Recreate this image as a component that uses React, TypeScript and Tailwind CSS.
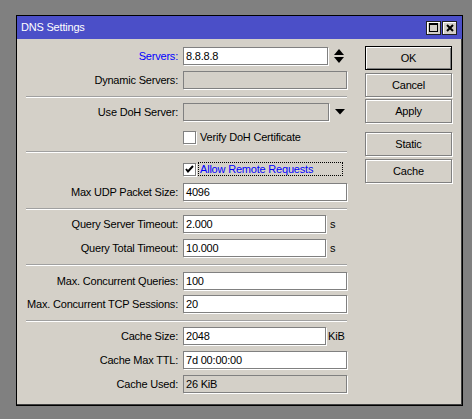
import React from 'react';

function Field({ value = '', disabled = false, w = 'w-[164px]' }: { value?: string; disabled?: boolean; w?: string }) {
  return (
    <div
      className={`${w} h-[18px] border border-[#808080] shadow-[1px_1px_0_#ffffff] pl-[2px] leading-[16px] whitespace-nowrap overflow-hidden ${
        disabled ? 'bg-[#d4d0c8]' : 'bg-white'
      }`}
    >
      {value}
    </div>
  );
}

function Row({ label, blue, className = '', children }: { label: string; blue?: boolean; className?: string; children: React.ReactNode }) {
  return (
    <div className={`flex h-[18px] items-center ${className}`}>
      <div className={`w-[152px] shrink-0 text-right leading-[18px] whitespace-nowrap ${blue ? 'text-[#0000ff]' : 'text-black'}`}>{label}</div>
      <div className="ml-[5px] flex items-center">{children}</div>
    </div>
  );
}

function Sep({ className = '' }: { className?: string }) {
  return <div className={`h-[2px] w-[321px] border-t border-[#a0a0a0] border-b border-b-white ${className}`} />;
}

function Check({ checked }: { checked?: boolean }) {
  return (
    <div className="flex h-[13px] w-[13px] items-center justify-center border border-[#808080] bg-white shadow-[1px_1px_0_#ffffff]">
      {checked && (
        <svg width="9" height="9" viewBox="0 0 9 9">
          <path d="M1 4 L3 6.5 L8 1" stroke="black" strokeWidth="2" fill="none" />
        </svg>
      )}
    </div>
  );
}

function Btn({ label, def, className = '' }: { label: string; def?: boolean; className?: string }) {
  return (
    <div
      className={`flex h-[24px] w-[87px] items-center justify-center text-black ${
        def ? 'border border-black shadow-[inset_1px_1px_0_#ffffff,inset_-1px_-1px_0_#808080]' : 'border border-[#808080] shadow-[1px_1px_0_#ffffff,inset_1px_1px_0_#ffffff]'
      } ${className}`}
    >
      {label}
    </div>
  );
}

function UpDown() {
  return (
    <svg width="10" height="15" viewBox="0 0 10 15" className="ml-[6px]">
      <path d="M5 0 L10 6 L0 6 Z" fill="black" />
      <path d="M0 8 L10 8 L5 14 Z" fill="black" />
    </svg>
  );
}

function DropDown() {
  return (
    <svg width="10" height="6" viewBox="0 0 10 6" className="ml-[6px]">
      <path d="M0 0 L10 0 L5 5.5 Z" fill="black" />
    </svg>
  );
}

export default function App() {
  return (
    <div className="h-[419px] w-[472px] bg-[#808080] pl-[16px] pt-[15px] font-['Liberation_Sans',Arial,sans-serif] text-[11px] tracking-[-0.2px]">
      <div className="flex h-[391px] w-[447px] flex-col border border-black bg-[#d4d0c8] shadow-[inset_-1px_-1px_0_#404040]">
        <div className="flex h-[23px] items-center bg-[#4b4fc8] pl-[4px] pr-[5px] text-white">
          <span className="flex-1 leading-[23px]">DNS Settings</span>
          <div className="flex h-[14px] w-[15px] items-center justify-center border border-[#202020] bg-[#d4d0c8] shadow-[inset_1px_1px_0_#ffffff]">
            <div className="h-[9px] w-[9px] border border-black border-t-2" />
          </div>
          <div className="ml-[1px] flex h-[14px] w-[15px] items-center justify-center border border-[#202020] bg-[#d4d0c8] shadow-[inset_1px_1px_0_#ffffff]">
            <svg width="8" height="8" viewBox="0 0 8 8">
              <path d="M1 1 L7 7 M7 1 L1 7" stroke="black" strokeWidth="2" />
            </svg>
          </div>
        </div>
        <div className="flex pl-[9px]">
          <div className="flex w-[321px] flex-col">
            <Row label="Servers:" blue className="mt-[8px]">
              <Field value="8.8.8.8" w="w-[145px]" />
              <UpDown />
            </Row>
            <Row label="Dynamic Servers:" className="mt-[6px]">
              <Field disabled />
            </Row>
            <Sep className="mt-[7px]" />
            <Row label="Use DoH Server:" className="mt-[5px]">
              <Field disabled w="w-[146px]" />
              <DropDown />
            </Row>
            <div className="mt-[9px] flex h-[14px] items-center pl-[157px]">
              <Check />
              <span className="ml-[4px] whitespace-nowrap">Verify DoH Certificate</span>
            </div>
            <Sep className="mt-[7px]" />
            <div className="mt-[9px] flex h-[14px] items-center pl-[157px]">
              <Check checked />
              <span className="ml-[2px] h-[14px] w-[145px] border border-dotted border-black pl-[1px] leading-[12px] whitespace-nowrap text-[#0000ff]">
                Allow Remote Requests
              </span>
            </div>
            <Row label="Max UDP Packet Size:" className="mt-[7px]">
              <Field value="4096" />
            </Row>
            <Sep className="mt-[7px]" />
            <Row label="Query Server Timeout:" className="mt-[5px]">
              <Field value="2.000" w="w-[143px]" />
              <span className="ml-[4px]">s</span>
            </Row>
            <Row label="Query Total Timeout:" className="mt-[6px]">
              <Field value="10.000" w="w-[143px]" />
              <span className="ml-[4px]">s</span>
            </Row>
            <Sep className="mt-[7px]" />
            <Row label="Max. Concurrent Queries:" className="mt-[6px]">
              <Field value="100" />
            </Row>
            <Row label="Max. Concurrent TCP Sessions:" className="mt-[5px]">
              <Field value="20" />
            </Row>
            <Sep className="mt-[7px]" />
            <Row label="Cache Size:" className="mt-[5px]">
              <Field value="2048" w="w-[143px]" />
              <span className="ml-[2px]">KiB</span>
            </Row>
            <Row label="Cache Max TTL:" className="mt-[6px]">
              <Field value="7d 00:00:00" />
            </Row>
            <Row label="Cache Used:" className="mt-[6px]">
              <Field value="26 KiB" disabled />
            </Row>
          </div>
          <div className="ml-[18px] flex flex-col pt-[7px]">
            <Btn label="OK" def />
            <Btn label="Cancel" className="mt-[3px]" />
            <Btn label="Apply" className="mt-[2px]" />
            <Btn label="Static" className="mt-[9px]" />
            <Btn label="Cache" className="mt-[3px]" />
          </div>
        </div>
      </div>
    </div>
  );
}
